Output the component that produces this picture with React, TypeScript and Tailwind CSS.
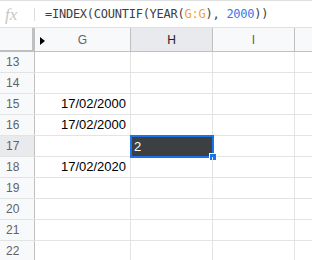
const ROWS = [13, 14, 15, 16, 17, 18, 19, 20, 21, 22]

const G_VALUES: Record<number, string> = {
  15: '17/02/2000',
  16: '17/02/2000',
  18: '17/02/2020',
}

export default function App() {
  return (
    <div className="w-[312px] h-[260px] overflow-hidden bg-white font-['Liberation_Sans',Arial,sans-serif]">
      {/* formula bar */}
      <div className="h-[28px] border-t border-b border-[#e0e0e0] flex items-center">
        <span className="w-[34px] pl-[5px] text-[17px] italic text-[#c6c6c6] font-['Liberation_Serif',serif] leading-none">
          fx
        </span>
        <span className="w-px h-[13px] bg-[#dadce0]" />
        <span className="pl-[10px] text-[12px] tracking-[-0.25px] text-[#3c4043] font-['DejaVu_Sans_Mono',monospace] whitespace-pre">
          =INDEX(COUNTIF(YEAR(<span className="text-[#f4a233]">G:G</span>), <span className="text-[#3b78e7]">2000</span>))
        </span>
      </div>

      {/* column headers */}
      <div className="flex h-[24px] bg-[#f8f9fa] border-b border-[#c0c0c0] text-[12px] text-[#5f6368]">
        <div className="w-[35px] border-r-[3px] border-b-[2px] border-[#c0c0c0] -mb-px" />
        <div className="relative w-[96px] border-r border-[#c0c0c0] flex items-center justify-center">
          <span className="absolute left-[5px] top-[9px] w-0 h-0 border-y-[4px] border-y-transparent border-l-[5px] border-l-black" />
          G
        </div>
        <div className="w-[82px] border-r border-[#c0c0c0] bg-[#e8eaed] text-[#202124] flex items-center justify-center">
          H
        </div>
        <div className="w-[82px] border-r border-[#c0c0c0] flex items-center justify-center">I</div>
        <div className="flex-1" />
      </div>

      {/* rows */}
      {ROWS.map((r) => (
        <div key={r} className="flex h-[21px] border-b border-[#e2e3e3] text-[13px]">
          <div
            className={`w-[35px] border-r border-[#c0c0c0] pl-[6px] flex items-center text-[12px] text-[#5f6368] ${
              r === 17 ? 'bg-[#e8eaed]' : 'bg-[#f8f9fa]'
            }`}
          >
            {r}
          </div>
          <div className="w-[96px] border-r border-[#e2e3e3] flex items-center justify-end pr-[4px] text-black">
            {G_VALUES[r] ?? ''}
          </div>
          <div className="relative w-[82px] border-r border-[#e2e3e3]">
            {r === 17 && (
              <div className="absolute -left-px -top-px w-[84px] h-[23px] border-2 border-[#1a73e8] bg-[#3c4043] flex items-center pl-[2px] text-white">
                2
                <span className="absolute -right-[5px] -bottom-[5px] w-[8px] h-[8px] bg-[#1a73e8] border border-white" />
              </div>
            )}
          </div>
          <div className="w-[82px] border-r border-[#e2e3e3]" />
          <div className="flex-1" />
        </div>
      ))}
    </div>
  )
}
